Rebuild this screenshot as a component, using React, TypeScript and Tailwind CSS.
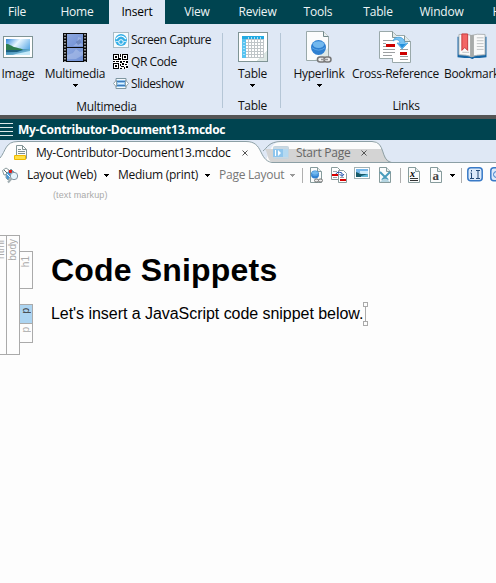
import React from "react";

type IconProps = { className?: string };

const Caret = ({ className = "text-black" }: IconProps) => (
  <svg className={`shrink-0 ${className}`} width="5" height="3" viewBox="0 0 5 3" shapeRendering="crispEdges" fill="currentColor">
    <path d="M0 0h5v1H0zM1 1h3v1H1zM2 2h1v1H2z" />
  </svg>
);

const Scene = () => (
  <>
    <linearGradient id="sky" x1="0" y1="0" x2="1" y2="0.6">
      <stop offset="0" stopColor="#2f86dc" />
      <stop offset="0.45" stopColor="#e8f6ff" />
      <stop offset="1" stopColor="#5aa9e6" />
    </linearGradient>
    <linearGradient id="sea" x1="0" y1="0" x2="1" y2="1">
      <stop offset="0" stopColor="#1e6f9b" />
      <stop offset="1" stopColor="#9bd8f3" />
    </linearGradient>
  </>
);

const ImageIcon = () => (
  <svg width="30" height="22" viewBox="0 0 30 22">
    <defs><Scene /></defs>
    <rect x="0.5" y="0.5" width="29" height="21" fill="#fff" stroke="#7f9495" />
    <rect x="3" y="3" width="24" height="16" fill="url(#sky)" />
    <path d="M3 13h24v6H3z" fill="url(#sea)" />
    <path d="M3 8c4 0 5 2 8 3s7 1 9 3H3z" fill="#2e7d4e" />
    <path d="M3 14h17l-6 2H3z" fill="#1b5f7e" />
    <path d="M13 18l14-3v4H10z" fill="#c5eafa" />
  </svg>
);

const FilmIcon = () => (
  <svg width="24" height="29" viewBox="0 0 24 29">
    <defs>
      <linearGradient id="film" x1="0" y1="0" x2="1" y2="1">
        <stop offset="0" stopColor="#8da8e0" />
        <stop offset="1" stopColor="#6f8fd4" />
      </linearGradient>
    </defs>
    <rect width="24" height="29" fill="#0a0a0a" />
    <rect x="4" y="1" width="16" height="13" fill="url(#film)" />
    <rect x="4" y="15" width="16" height="13" fill="url(#film)" />
    <path d="M10 13l4-3 1-6 3 1-1 4 3 3v1zM4 22l6-2 3-4 4 3 3-1v4l-7 4H4z" fill="#b4c6ec" opacity=".5" />
    <path d="M13 9l4-3 1 4-3 2z" fill="#4a65a0" opacity=".5" />
    <path d="M2 1v28M22 1v28" stroke="#c3c8ce" strokeWidth="1.5" strokeDasharray="1.500 1.500" />
  </svg>
);

const CaptureIcon = () => (
  <svg width="16" height="16" viewBox="0 0 16 16">
    <rect x="0.5" y="0.5" width="15" height="15" fill="#f7fbfd" stroke="#a9bcc5" />
    <circle cx="8" cy="8" r="6" fill="#35afe6" />
    <path d="M3 7q5-6 10 0" fill="none" stroke="#fff" strokeWidth="1.2" />
    <circle cx="8" cy="10" r="2.300" fill="none" stroke="#fff" />
    <path d="M2.500 9.500h3M10.500 9.500h3" stroke="#bfe8fa" />
  </svg>
);

const QrIcon = () => (
  <svg width="15" height="15" viewBox="0 0 15 15" shapeRendering="crispEdges" className="mr-px">
    <rect width="15" height="15" fill="#fff" />
    <path d="M0.5.5h5v5h-5zM9.5.5h5v5h-5zM.5 9.5h5v5h-5z" fill="none" stroke="#000" />
    <path d="M2 2h2v2H2zM11 2h2v2h-2zM2 11h2v2H2zM7 0h1v3H7zM6 4h2v2H6zM0 7h2v1H0zM3 7h3v1H3zM7 7h2v2H7zM10 7h2v1h-2zM13 7h2v2h-2zM7 10h1v2H7zM9 9h2v2H9zM12 10h2v1h-2zM8 12h3v1H8zM7 14h2v1H7zM11 13h1v2h-1zM13 12h2v2h-2z" fill="#000" />
  </svg>
);

const SlideshowIcon = () => (
  <svg width="16" height="13" viewBox="0 0 16 13">
    <path d="M3 1.500h10v3h-10zM3 8.500h10v3H3z" fill="#f5f9fc" stroke="#7e96a0" />
    <path d="M3.500 3v7L.5 6.500zM12.500 3v7l3-3.500z" fill="#fff" stroke="#8ea2aa" />
    <rect x="4" y="3" width="8" height="7" fill="#8fc4ee" />
    <path d="M4 4.500h8M4 8.500h8" stroke="#3d78b8" />
    <path d="M5 6.500h6" stroke="#e4f3ff" />
  </svg>
);

const TableIcon = () => (
  <svg width="30" height="30" viewBox="0 0 30 30" shapeRendering="crispEdges">
    <rect x="0.5" y="0.5" width="29" height="29" fill="#fff" stroke="#7f9495" />
    <path d="M29 18v11H18l5-4z" fill="#dbe6e3" />
    <rect x="4" y="4" width="22" height="22" fill="#bfc5c8" />
    <rect x="4" y="4" width="22" height="3" fill="#22aae2" />
    <rect x="4" y="7" width="4" height="19" fill="#59c3f0" />
    {[8, 11, 14, 17, 20, 23].map((x) =>
      [8, 11, 14, 17, 20, 23].map((y) => <rect key={`${x}-${y}`} x={x} y={y} width="2" height="2" fill="#fff" />)
    )}
    <path d="M5 10h2M5 13h2M5 16h2M5 19h2M5 22h2M10 5v2M13 5v2M16 5v2M19 5v2M22 5v2" stroke="#a8e2fa" />
  </svg>
);

const Globe = ({ cx, cy, r }: { cx: number; cy: number; r: number }) => (
  <>
    <circle cx={cx} cy={cy} r={r} fill="#2f80d1" />
    <ellipse cx={cx} cy={cy - r * 0.4} rx={r * 0.75} ry={r * 0.45} fill="#72b8ee" />
    <path d={`M${cx - r * 0.9} ${cy}q${r * 0.9} ${r * 0.7} ${r * 1.8} 0`} stroke="#5aa5e5" fill="none" />
  </>
);

const HyperlinkIcon = () => (
  <svg width="26" height="32" viewBox="0 0 26 32">
    <path d="M.5.5h17l5 5v24H.5z" fill="#fbfcfc" stroke="#9aa9aa" />
    <path d="M22 17v12H9z" fill="#dfe9e6" />
    <path d="M17.5.5v5h5" fill="#e7eeee" stroke="#71888a" />
    <Globe cx={12.5} cy={16.5} r={7.5} />
    <rect x="11.5" y="26" width="8" height="5" rx="2.5" fill="#eee" stroke="#777" strokeWidth="1.5" />
    <rect x="18" y="26" width="7" height="5" rx="2.5" fill="#eee" stroke="#777" strokeWidth="1.5" />
    <path d="M15 28.500h7" stroke="#999" strokeWidth="1.5" />
  </svg>
);

const CrossReferenceIcon = () => (
  <svg width="33" height="32" viewBox="0 0 33 32">
    <path d="M.5.5h13l6 6v21H.5z" fill="#fff" stroke="#9aa9aa" />
    <path d="M13.500 4.500h12l6 6v21h-18z" fill="#fff" stroke="#9aa9aa" />
    <path d="M25.500 4.500v6h6" fill="#e1e9e9" stroke="#829596" />
    <path d="M1 1h12.500l5 5.500V27H1z" fill="#fff" />
    <path d="M13.500.5v6h5" fill="#e1e9e9" stroke="#829596" />
    <path d="M4 9.500h11M4 12.500h3M4 15.500h3M4 18.500h12M4 21.500h12M4 24.500h9M21 18.500h8M21 25.500h8M21 28.500h8" stroke="#9c9fa1" />
    <path d="M7 13h9v3H7zM21 21h7v3h-7z" fill="#cc0000" />
    <path d="M14 10c1-5 11-6 12 2h3l-6 6-5-6h3c-1-4-4-4-7-2z" fill="#79c3f2" stroke="#3d9ddd" strokeWidth=".7" />
    <path d="M20 13h7l-4 4z" fill="#2490dc" />
  </svg>
);

const BookmarkIcon = () => (
  <svg width="30" height="28" viewBox="0 0 30 29">
    <path d="M0 4h30v21q-8 1-13 1-1 2-4 0-5 0-13-1z" fill="#1766a5" />
    <path d="M1.5 1.5q8-1 13 1 5-2 14-1v21q-9 0-14 2-5-2-13-2z" fill="#f9f9f9" stroke="#aeb3b5" />
    <path d="M13 2h4v22l-2 1-2-1z" fill="#a7aaa9" />
    <path d="M20 5h7M20 8h7M20 11h7M20 14h7M20 17h7M5 20h7" stroke="#bfc2c3" />
    <path d="M4.5 1h6v17l-3-3-3 3z" fill="#f26666" stroke="#c93b3e" />
  </svg>
);

const DocumentIcon = () => (
  <svg width="13" height="16" viewBox="0 0 13 16" className="shrink-0">
    <path d="M2.500.5h6l4 4v9h-10z" fill="#fafcfc" stroke="#849698" />
    <path d="M8.500.5v4h4M4 4.500h3M4 6.500h7M4 8.500h7" fill="none" stroke="#7f9091" />
    <rect x="0" y="10" width="12" height="5" rx="1" fill="#efb900" />
    <rect x="1" y="11" width="10" height="3" fill="#ffe044" />
  </svg>
);

const StartPageIcon = () => (
  <svg width="16" height="13" viewBox="0 0 16 13">
    <rect x=".5" y=".5" width="15" height="12" rx="1" fill="#c9d8e2" stroke="#c4d4df" />
    <rect y="3" width="10" height="8" fill="#8fc6ed" />
    <path d="M2 4v6h1V4zM5 4v6l3-3z" fill="#fff" />
    <path d="M10 3h5v8h-5z" fill="#b4d9f1" />
  </svg>
);

const MarkupIcon = () => (
  <svg width="17" height="17" viewBox="0 0 17 17" className="shrink-0">
    <path d="M.5 3.500L4 1l3 2-1 4-4 1z" fill="#fff" stroke="#8b9b9d" />
    <path d="M2 3l3 3" stroke="#506b72" />
    <path d="M4 7l5-5 3 3-6 8-2-2z" fill="#4d9ad6" stroke="#87a1ab" />
    <rect x="7" y="3" width="3" height="3" fill="#df201b" />
    <path d="M5 7l3 3" stroke="#fff" />
    <circle cx="12" cy="9" r="3.700" fill="#e7f5fd" stroke="#8293a0" />
    <path d="M9.500 11.500L6 15.500" stroke="#a1adb1" strokeWidth="2" />
  </svg>
);

const Page = ({ children }: { children?: React.ReactNode }) => (
  <svg width="14" height="16" viewBox="0 0 14 16" className="shrink-0 overflow-visible">
    <path d="M1.500.5h7l4 4v11h-11z" fill="#fbfcfc" stroke="#869b9c" />
    <path d="M8.500.5v4h4" fill="#e5eceb" stroke="#869b9c" />
    {children}
  </svg>
);

const SmallImageIcon = () => (
  <svg width="16" height="12" viewBox="0 0 16 12" className="mb-1 ml-[7px] shrink-0">
    <rect x=".5" y=".5" width="15" height="11" fill="#fff" stroke="#a3b2b4" />
    <path d="M2 2h12v4H2z" fill="#75b7ea" />
    <path d="M6 4h8v3H6z" fill="#cceafa" />
    <path d="M2 5l5 2h7v3H2z" fill="#175a69" />
    <path d="M7 9l7-2v3H7z" fill="#61b8d8" />
  </svg>
);

const SmallCrossIcon = () => (
  <svg width="16" height="16" viewBox="0 0 16 16" className="ml-[8px] shrink-0">
    <path d="M.5.5h6l3 3v9h-9z" fill="#fff" stroke="#8b9d9d" />
    <path d="M7.500 3.500h5l3 3v9h-8z" fill="#fff" stroke="#8b9d9d" />
    <path d="M2 4.500h4M2 10.500h4M9 10.500h4" stroke="#9ca7a9" />
    <path d="M1 7h6v2H1zM9 12h6v2H9z" fill="#d80000" />
    <path d="M5 7q1-3 6-1v3M8.500 7l2.500 2.500L13 7" fill="none" stroke="#2352ac" />
  </svg>
);

const RibbonButton = ({ icon, label, caret, className }: { icon: React.ReactNode; label: string; caret?: boolean; className: string }) => (
  <div className={`flex shrink-0 flex-col items-center ${className}`}>
    <div className="flex h-[34px] items-center justify-center">{icon}</div>
    <span className="mt-px h-[18px] leading-[18px]">{label}</span>
    {caret && <Caret className="mt-px text-black" />}
  </div>
);

const Separator = () => <div className="mt-[9px] h-[75px] w-px shrink-0 bg-[#b5c6d6]" />;
const ToolSeparator = ({ className }: IconProps) => <div className={`h-[15px] w-px shrink-0 bg-[#afafaf] ${className}`} />;

const NodeLabel = ({ children }: { children: string }) => (
  <span className="rotate-180 self-start [writing-mode:vertical-rl]">{children}</span>
);

const menu = [
  { label: "File", className: "w-[60px]" },
  { label: "Home", className: "w-[60px]" },
  { label: "Insert", className: "mx-[2px] w-[56px] bg-[#dfe8f5] text-black" },
  { label: "View", className: "w-[60px]" },
  { label: "Review", className: "w-[61px]" },
  { label: "Tools", className: "w-[60px]" },
  { label: "Table", className: "w-[60px]" },
  { label: "Window", className: "w-[67px]" },
  { label: "Help", className: "w-[60px]" },
];

export default function App() {
  return (
    <div className="flex h-[583px] w-[496px] flex-col overflow-hidden bg-[#fdfdfd] font-['Open_Sans',sans-serif] text-[12px] tracking-[-0.2px] whitespace-nowrap text-[#111]">
      <nav className="flex h-6 shrink-0 bg-[#004450] text-[#eef4f5]">
        <div className="-ml-[13px] flex">
          {menu.map((m) => (
            <div key={m.label} className={`flex shrink-0 items-center justify-center ${m.className}`}>{m.label}</div>
          ))}
        </div>
      </nav>

      <div className="flex h-[91px] shrink-0 bg-[#dfe8f5] tracking-[-0.3px]">
        <section className="flex w-[222px] shrink-0 flex-col">
          <div className="flex h-[74px] pt-[6px]">
            <RibbonButton className="w-9" icon={<ImageIcon />} label="Image" />
            <RibbonButton className="w-[78px]" icon={<FilmIcon />} label="Multimedia" caret />
            <div className="-ml-px flex flex-col tracking-[-0.42px]">
              {[
                { icon: <CaptureIcon />, label: "Screen Capture" },
                { icon: <QrIcon />, label: "QR Code" },
                { icon: <SlideshowIcon />, label: "Slideshow" },
              ].map((item) => (
                <div key={item.label} className="flex h-[22px] items-center gap-[2px] pb-[3px]">
                  {item.icon}
                  <span>{item.label}</span>
                </div>
              ))}
            </div>
          </div>
          <div className="mt-[2px] pr-[9px] text-center leading-[18px]">Multimedia</div>
        </section>
        <Separator />
        <section className="flex w-[57px] shrink-0 flex-col items-center">
          <div className="h-[74px] pt-[6px]">
            <RibbonButton className="w-[57px] pl-[2px]" icon={<TableIcon />} label="Table" caret />
          </div>
          <div className="mt-[2px] pl-[2px] leading-[18px]">Table</div>
        </section>
        <Separator />
        <section className="flex w-[250px] shrink-0 flex-col">
          <div className="flex h-[74px] pt-[6px]">
            <RibbonButton className="w-[76px]" icon={<HyperlinkIcon />} label="Hyperlink" caret />
            <RibbonButton className="w-[77px]" icon={<CrossReferenceIcon />} label="Cross-Reference" />
            <RibbonButton className="w-[75px]" icon={<BookmarkIcon />} label="Bookmark" />
          </div>
          <div className="mt-[2px] text-center leading-[18px]">Links</div>
        </section>
      </div>

      <div className="h-1 shrink-0 bg-[#555]" />
      <header className="flex h-[21px] shrink-0 items-center gap-[5px] bg-[#004450] font-bold text-white">
        <div className="flex w-[13px] flex-col gap-[3px]">
          {[0, 1, 2, 3].map((n) => <div key={n} className="h-px bg-[#dce8e9]" />)}
        </div>
        <span className="tracking-[-0.26px]">My-Contributor-Document13.mcdoc</span>
      </header>

      <div className="relative h-[23px] shrink-0 bg-[#dfe8f5]">
        <svg className="absolute inset-0" width="496" height="23" viewBox="0 0 496 23">
          <path d="M263 22.5C269 21 268 2 281 1.500H374C385 1 380 22 393 22.500z" fill="#fbfbfb" />
          <path d="M265 9H382C384 14 386 21 392 22H272C267 20 268 13 265 9z" fill="#d4d4d4" />
          <path d="M263 11C267 8 269 1.500 281 1.500H372C386 1.500 380 20 391 22.500H496" fill="none" stroke="#8c9fa5" />
          <path d="M0 18C6 11 5 1.500 18 1.500H246C264 1.500 258 20 272 22.500V23H0z" fill="#fdfdfd" />
          <path d="M0 18C6 11 5 1.500 18 1.500H246C264 1.500 258 20 272 22.500H496" fill="none" stroke="#8c9fa5" />
        </svg>
        <div className="relative flex h-[25px] items-center pl-[14px]">
          <DocumentIcon />
          <span className="ml-[9px] w-[206px] shrink-0 tracking-[-0.26px]">My-Contributor-Document13.mcdoc</span>
          <Close />
          <span className="ml-[25px] shrink-0"><StartPageIcon /></span>
          <span className="ml-[7px] w-[65px] shrink-0 tracking-[-0.25px] text-[#666]">Start Page</span>
          <Close />
        </div>
      </div>

      <div className="flex h-6 shrink-0 items-center overflow-hidden pl-[2px]">
        <MarkupIcon />
        <span className="ml-[8px] w-[77px] shrink-0 tracking-[-0.3px]">Layout (Web)</span><Caret />
        <span className="ml-[9px] w-[87px] shrink-0 tracking-[-0.25px]">Medium (print)</span><Caret />
        <span className="ml-[9px] w-[71px] shrink-0 tracking-[-0.25px] text-[#777]">Page Layout</span><Caret className="text-[#999]" />
        <ToolSeparator className="mr-[6px] ml-[7px]" />
        <Page>
          <Globe cx={6} cy={7.5} r={4} />
          <rect x="5.500" y="12" width="4" height="3" rx="1.500" fill="#eee" stroke="#777" />
          <rect x="9.500" y="12" width="4" height="3" rx="1.500" fill="#eee" stroke="#777" />
        </Page>
        <SmallCrossIcon />
        <SmallImageIcon />
        <div className="ml-[8px] shrink-0">
          <Page>
            <path d="M2 5l8 8M12 5l-8 8" stroke="#4a9cbc" strokeWidth="2" />
            <path d="M2 15l3-3h4l3 3z" fill="#b5d5e1" />
          </Page>
        </div>
        <ToolSeparator className="mr-[6px] ml-[8px]" />
        <div className="flex shrink-0 gap-[8px]">
          <Page>
            <text x="3" y="10" fontSize="10" fontFamily="Liberation Serif" fontWeight="bold" fontStyle="italic">x</text>
            <path d="M3 11.500h8M3 13.500h8" stroke="#333" />
          </Page>
          <Page><text x="3.500" y="13" fontSize="13" fontFamily="Liberation Serif" fontWeight="bold" fill="#444">a</text></Page>
        </div>
        <span className="ml-[7px] shrink-0"><Caret /></span>
        <ToolSeparator className="mr-[5px] ml-[6px]" />
        <svg width="16" height="15" viewBox="0 0 16 15" className="mb-[2px] shrink-0">
          <rect x=".8" y=".8" width="14.400" height="13" rx="3" fill="#dceafa" stroke="#397ac7" strokeWidth="1.500" />
          <path d="M4.500 3v1.500M3.500 6h1v5.500M3 11.500h4M9 3.500h4M11 3.500v8M9 11.500h4" stroke="#254b77" fill="none" />
        </svg>
        <svg width="16" height="15" viewBox="0 0 16 15" className="mb-[2px] ml-[7px] shrink-0">
          <rect x=".8" y=".8" width="14.400" height="13" rx="3" fill="#dceafa" stroke="#397ac7" strokeWidth="1.500" />
          <circle cx="6.500" cy="7.500" r="3" fill="none" stroke="#397ac7" />
        </svg>
      </div>

      <main className="flex flex-1">
        <aside className="mt-[48px] flex w-[33px] shrink-0 items-start font-['Liberation_Sans',sans-serif] text-[10px] leading-none tracking-normal text-[#aaa]">
          <div className="flex h-[120px] w-[7px] items-start justify-end overflow-hidden border-y border-r border-[#aaa] pt-1">
            <NodeLabel>html</NodeLabel>
          </div>
          <div className="flex h-[120px] w-[13px] items-start justify-center border-y border-r border-[#aaa] pt-[3px]">
            <NodeLabel>body</NodeLabel>
          </div>
          <div className="mt-4 flex w-[13px] flex-col">
            <div className="flex h-[38px] justify-center border-y border-r border-[#aaa] pt-1"><NodeLabel>h1</NodeLabel></div>
            <div className="mt-[15px] flex h-5 justify-center border-y border-r border-[#aaa] bg-[#acd4f1] pt-[3px] text-[#333]"><NodeLabel>p</NodeLabel></div>
            <div className="flex h-[19px] justify-center border-r border-b border-[#aaa] pt-[3px]"><NodeLabel>p</NodeLabel></div>
          </div>
        </aside>
        <article className="flex flex-col items-start pl-[18px] font-['Liberation_Sans',sans-serif] tracking-normal text-black">
          <span className="ml-[2px] h-4 text-[9px] leading-4 tracking-[0.12px] text-[#aaa]">(text markup)</span>
          <h1 className="mt-[49px] text-[32px] leading-9 font-bold tracking-[0.18px]">Code Snippets</h1>
          <p className="mt-[14px] flex h-6 items-center text-[16px] tracking-[-0.045px]">
            <span>Let's insert a JavaScript code snippet below.</span>
            <svg width="5" height="24" viewBox="0 0 5 24" shapeRendering="crispEdges" fill="none" stroke="#aaa">
              <path d="M.5.500h4v4h-4zM2.500 5v14M.5 19.500h4v4h-4z" />
            </svg>
          </p>
        </article>
      </main>
    </div>
  );
}

function Close() {
  return (
    <svg width="6" height="6" viewBox="0 0 6 6" className="shrink-0">
      <path d="M.5.500l5 5M5.500.500l-5 5" stroke="#555" />
    </svg>
  );
}
